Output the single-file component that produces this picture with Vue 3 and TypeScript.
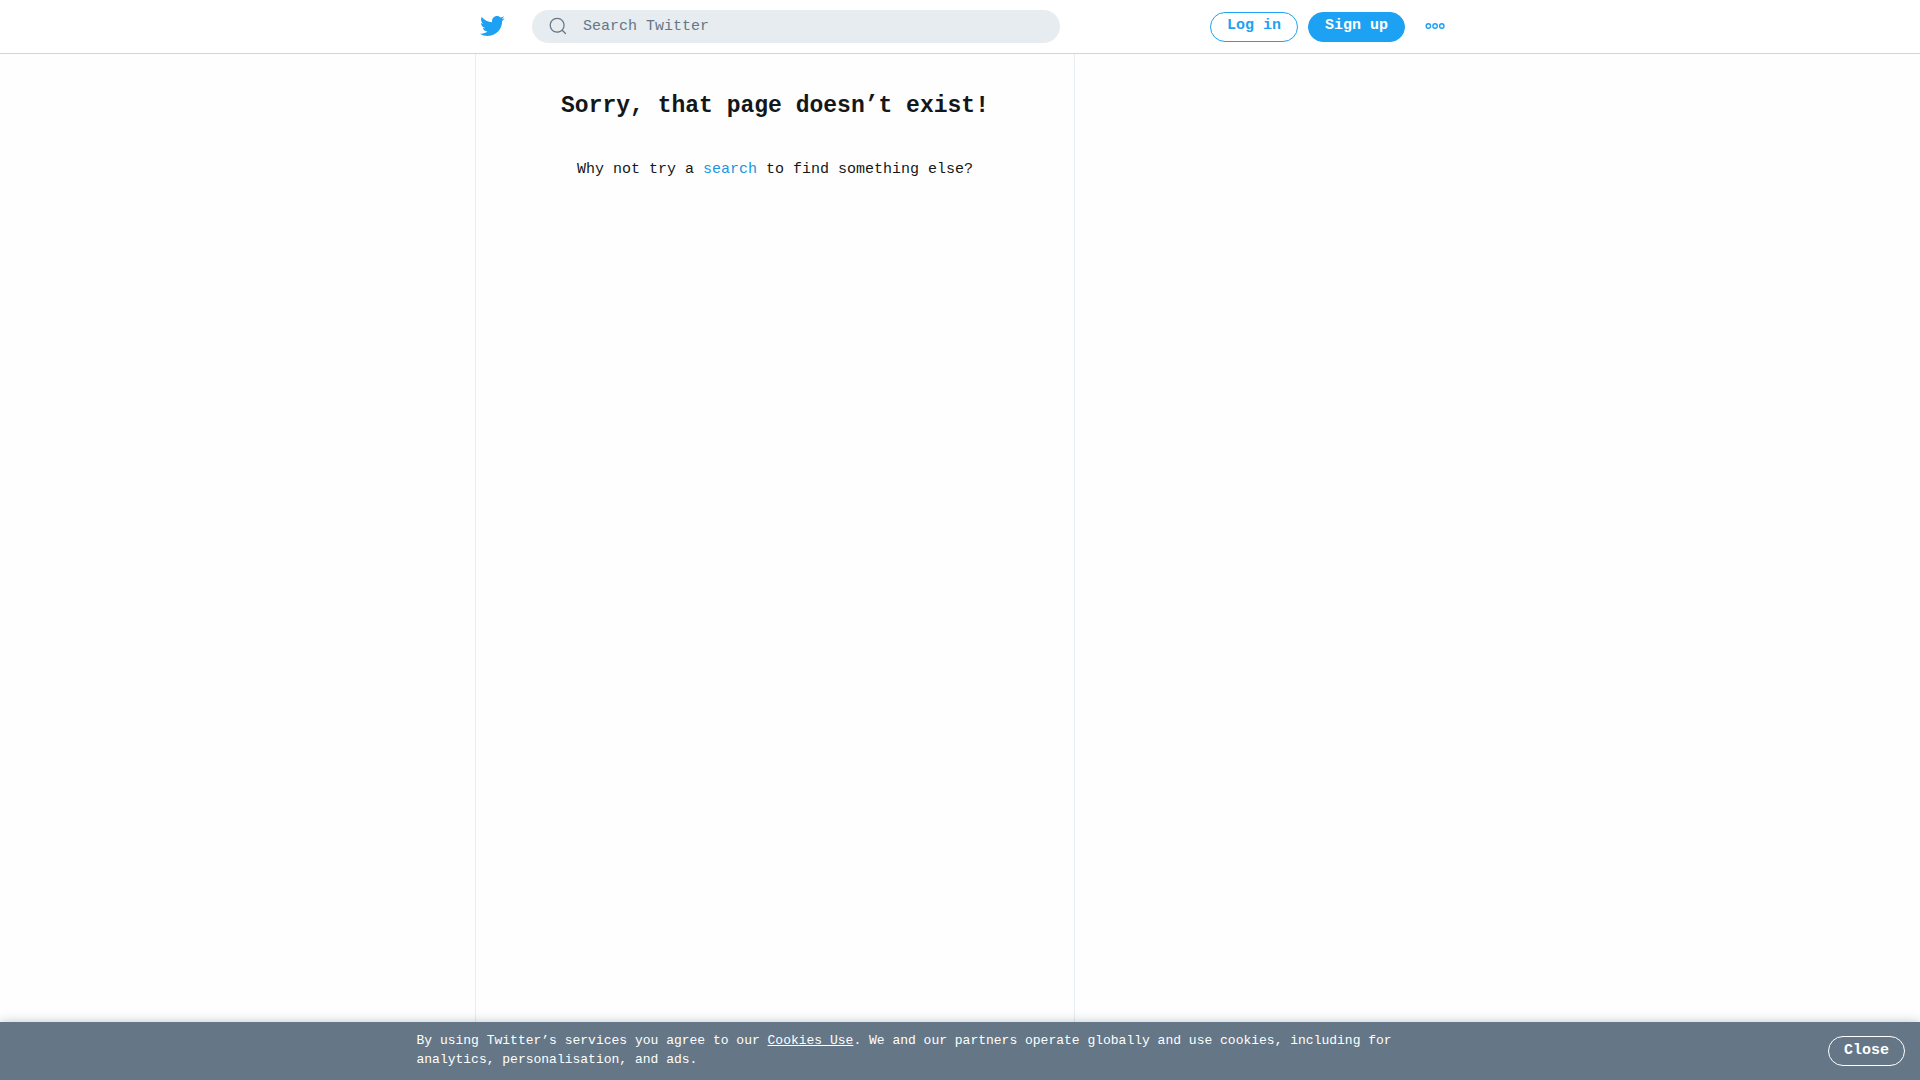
<script setup lang="ts">
import { ref } from 'vue'

const query = ref('')
const showCookieNotice = ref(true)
</script>

<template>
  <div class="page">
    <header class="topbar">
      <div class="topbar-inner">
        <a href="#" class="logo" aria-label="Twitter">
          <svg viewBox="0 0 24 24" aria-hidden="true">
            <path d="M23.643 4.937c-.835.37-1.732.62-2.675.733.962-.576 1.7-1.49 2.048-2.578-.9.534-1.897.922-2.958 1.13-.85-.904-2.06-1.47-3.4-1.47-2.572 0-4.658 2.086-4.658 4.66 0 .364.042.718.12 1.06-3.873-.195-7.304-2.05-9.602-4.868-.4.69-.63 1.49-.63 2.342 0 1.616.823 3.043 2.072 3.878-.764-.025-1.482-.234-2.11-.583v.06c0 2.257 1.605 4.14 3.737 4.568-.392.106-.803.162-1.227.162-.3 0-.593-.028-.877-.082.593 1.85 2.313 3.198 4.352 3.234-1.595 1.25-3.604 1.995-5.786 1.995-.376 0-.747-.022-1.112-.065 2.062 1.323 4.51 2.093 7.14 2.093 8.57 0 13.255-7.098 13.255-13.254 0-.2-.005-.402-.014-.602.91-.658 1.7-1.477 2.323-2.41z" />
          </svg>
        </a>
        <form class="search" role="search" @submit.prevent>
          <label for="search-box" aria-label="Search Twitter">
            <svg viewBox="0 0 24 24" aria-hidden="true">
              <path d="M21.53 20.47l-3.66-3.66C19.195 15.24 20 13.214 20 11c0-4.97-4.03-9-9-9s-9 4.03-9 9 4.03 9 9 9c2.215 0 4.24-.804 5.808-2.13l3.66 3.66c.147.146.34.22.53.22s.385-.073.53-.22c.295-.293.295-.767.002-1.06zM3.5 11c0-4.135 3.365-7.5 7.5-7.5s7.5 3.365 7.5 7.5-3.365 7.5-7.5 7.5-7.5-3.365-7.5-7.5z" />
            </svg>
          </label>
          <input id="search-box" v-model="query" type="text" placeholder="Search Twitter" />
        </form>
        <nav class="actions">
          <button type="button" class="pill outline">Log in</button>
          <button type="button" class="pill solid">Sign up</button>
          <button type="button" class="more" aria-label="More">
            <svg viewBox="0 0 20 20" aria-hidden="true">
              <circle cx="3.4" cy="10" r="2.2" />
              <circle cx="10.1" cy="10" r="2.2" />
              <circle cx="16.8" cy="10" r="2.2" />
            </svg>
          </button>
        </nav>
      </div>
    </header>

    <div class="content">
      <main class="column">
        <h1>Sorry, that page doesn’t exist!</h1>
        <p>Why not try a <a href="#">search</a> to find something else?</p>
      </main>
    </div>

    <aside v-if="showCookieNotice" class="notice">
      <div class="notice-body">
        <p>
          By using Twitter’s services you agree to our <a href="#">Cookies Use</a>. We and our
          partners operate globally and use cookies, including for analytics, personalisation, and
          ads.
        </p>
      </div>
      <button type="button" class="pill light" @click="showCookieNotice = false">Close</button>
    </aside>
  </div>
</template>

<style>
body {
  background: #fefefe;
}
</style>

<style scoped>
.page {
  display: flex;
  flex-direction: column;
  min-height: 100vh;
  color: #14171a;
  font: 15px/20px "Liberation Mono", monospace;
}

.page * {
  box-sizing: border-box;
}

h1,
p {
  margin: 0;
}

svg {
  display: block;
  fill: currentColor;
}

button,
input {
  font: inherit;
}

.topbar {
  border-bottom: 1px solid #ccd6dd;
  background: #fff;
}

.topbar-inner {
  display: flex;
  align-items: center;
  max-width: 990px;
  height: 53px;
  margin: 0 auto;
  padding: 0 10px;
}

.logo {
  padding: 0 27px 1px 4px;
  color: #1da1f2;
}

.logo svg {
  width: 26px;
  height: 26px;
}

.search {
  display: flex;
  flex: 0 1 528px;
  align-items: center;
  gap: 15px;
  height: 33px;
  padding: 0 16px;
  border-radius: 17px;
  background: #e6ecf0;
  color: #657786;
}

.search label {
  padding-bottom: 1px;
}

.search svg {
  width: 20px;
  height: 20px;
}

.search input {
  flex: 1;
  min-width: 0;
  padding: 0;
  border: 0;
  outline: 0;
  background: none;
  color: #14171a;
}

.search input::placeholder {
  color: #657786;
  opacity: 1;
}

.actions {
  display: flex;
  align-items: center;
  gap: 10px;
  margin-left: auto;
}

.pill {
  flex: none;
  height: 30px;
  padding: 0 16px 2px;
  border: 1px solid currentColor;
  border-radius: 15px;
  background: none;
  font-weight: 700;
  line-height: 20px;
  cursor: pointer;
}

.outline {
  color: #1da1f2;
}

.solid {
  border-color: #1da1f2;
  background: #1da1f2;
  color: #fff;
}

.more {
  margin-left: 10px;
  padding: 0 0 1px;
  border: 0;
  background: none;
  color: #1da1f2;
  cursor: pointer;
}

.more svg {
  width: 20px;
  height: 20px;
  fill: none;
  stroke: currentColor;
  stroke-width: 1.4;
}

.content {
  display: flex;
  flex: 1;
  width: 100%;
  max-width: 990px;
  margin: 0 auto;
  padding: 0 10px;
  box-sizing: border-box;
}

.column {
  flex: 0 1 600px;
  padding: 37px 20px;
  border: solid #e6ecf0;
  border-width: 0 1px;
  text-align: center;
}

h1 {
  margin-bottom: 39px;
  font-size: 23px;
  line-height: 30px;
}

.column a {
  color: #1b95e0;
  text-decoration: none;
}

.notice {
  position: sticky;
  bottom: 0;
  display: flex;
  align-items: center;
  padding: 9px 15px 9px 0;
  background: #657786;
  box-shadow: 0 0 10px rgba(101, 119, 134, 0.4);
  color: #fff;
}

.notice-body {
  flex: 1;
}

.notice-body p {
  max-width: 995px;
  margin: 0 auto;
  padding-bottom: 2px;
  font-size: 13px;
  line-height: 19px;
}

.notice-body a {
  color: inherit;
}

.light {
  padding: 0 15px;
  color: #fff;
}
</style>
